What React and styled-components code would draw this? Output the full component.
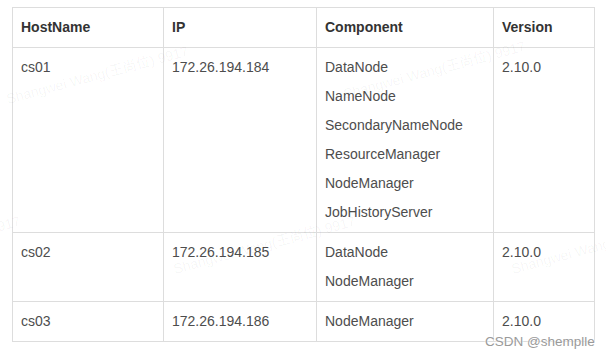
import React from "react";
import styled, { createGlobalStyle } from "styled-components";

const Global = createGlobalStyle`
  html, body { margin: 0; padding: 0; background: #fff; }
  body { font-family: Arial, "Liberation Sans", "Noto Sans CJK SC", sans-serif; }
`;

const Page = styled.div`
  position: relative;
  width: 606px;
  height: 359px;
  overflow: hidden;
  padding: 7px 0 0 12px;
  box-sizing: border-box;
  background: #fff;
`;

const Table = styled.table`
  border-collapse: collapse;
  table-layout: fixed;
  width: 582px;
  font-size: 14px;
  line-height: 29px;
  color: #4d4d4d;
`;

const Col = styled.col`
  width: ${(p) => p.$w}px;
`;

const Th = styled.th`
  border: 1px solid #dddddd;
  padding: 5px 8px;
  text-align: left;
  font-weight: bold;
  color: #333;
  vertical-align: top;
`;

const Td = styled.td`
  border: 1px solid #dddddd;
  padding: 5px 8px;
  vertical-align: top;
  white-space: nowrap;
`;

const Line = styled.div`
  display: block;
`;

const Watermarks = styled.svg`
  position: absolute;
  left: 0;
  top: 0;
  pointer-events: none;
`;

const Credit = styled.div`
  position: absolute;
  left: 485px;
  top: 333px;
  font-size: 13.5px;
  line-height: 18px;
  color: #9a9a9a;
  text-shadow: 0 0 2px #fff, 0 0 2px #fff;
  pointer-events: none;
`;

const rows = [
  { host: "cs01", ip: "172.26.194.184", comps: ["DataNode", "NameNode", "SecondaryNameNode", "ResourceManager", "NodeManager", "JobHistoryServer"], ver: "2.10.0" },
  { host: "cs02", ip: "172.26.194.185", comps: ["DataNode", "NodeManager"], ver: "2.10.0" },
  { host: "cs03", ip: "172.26.194.186", comps: ["NodeManager"], ver: "2.10.0" },
];

const marks = [
  [8, 104],
  [345, 99],
  [175, 274],
  [513, 274],
  [-160, 274],
];

export default function App() {
  return (
    <>
      <Global />
      <Page>
        <Table>
          <colgroup>
            <Col $w={151} />
            <Col $w={153} />
            <Col $w={177} />
            <Col $w={101} />
          </colgroup>
          <thead>
            <tr>
              <Th>HostName</Th>
              <Th>IP</Th>
              <Th>Component</Th>
              <Th>Version</Th>
            </tr>
          </thead>
          <tbody>
            {rows.map((r) => (
              <tr key={r.host}>
                <Td>{r.host}</Td>
                <Td>{r.ip}</Td>
                <Td>
                  {r.comps.map((c, i) => (
                    <Line key={i}>{c}</Line>
                  ))}
                </Td>
                <Td>{r.ver}</Td>
              </tr>
            ))}
          </tbody>
        </Table>
        <Watermarks width="606" height="359" viewBox="0 0 606 359">
          {marks.map(([x, y], i) => (
            <text
              key={i}
              x={x}
              y={y}
              transform={`rotate(-15 ${x} ${y})`}
              fontSize="14"
              fontFamily='Arial, "Liberation Sans", "Noto Sans CJK SC", sans-serif'
              fill="#000"
              fillOpacity="0.045"
            >
              Shangwei Wang(王尚位) 9917
            </text>
          ))}
        </Watermarks>
        <Credit>CSDN @shemplle</Credit>
      </Page>
    </>
  );
}
